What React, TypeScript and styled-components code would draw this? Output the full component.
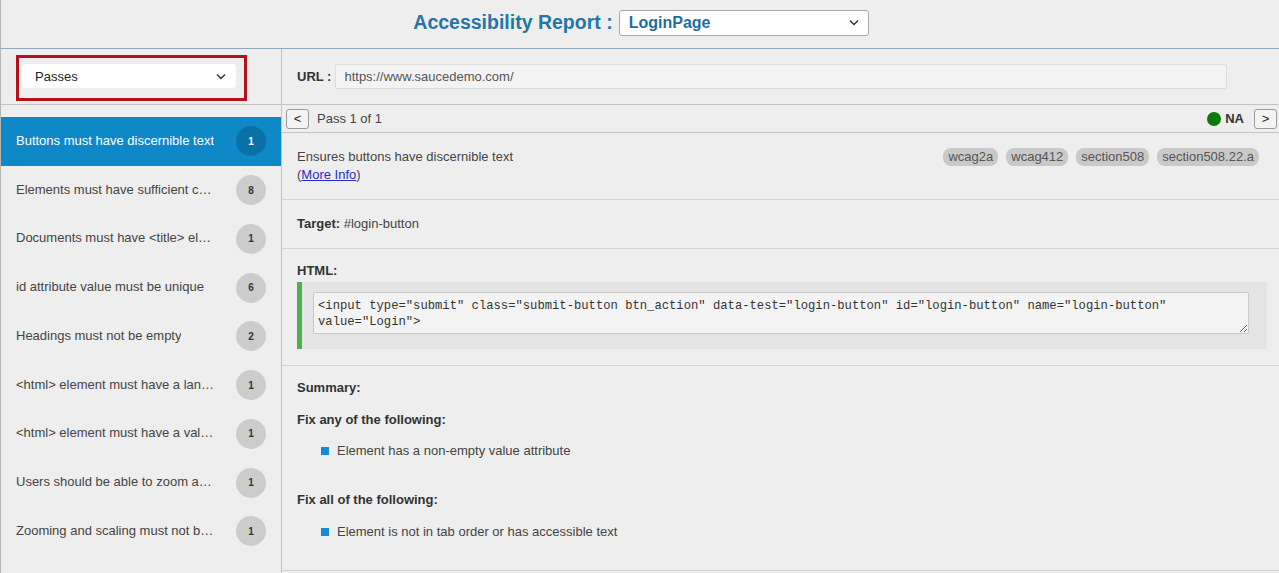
import React from "react";
import styled, { createGlobalStyle } from "styled-components";

const Global = createGlobalStyle`
  html, body { margin: 0; padding: 0; background: #eeeeee; }
  body { font-family: "Liberation Sans", Arial, sans-serif; font-size: 13px; color: #444; }
  * { box-sizing: border-box; }
`;

const Page = styled.div`
  width: 1279px;
  height: 573px;
  border-left: 1px solid #b5b5b5;
  background: #eeeeee;
  display: flex;
  flex-direction: column;
  overflow: hidden;
`;

const Header = styled.header`
  height: 49px;
  border-bottom: 1px solid #91a9bd;
  display: flex;
  align-items: center;
  justify-content: center;
  gap: 6px;
  padding-bottom: 3px;
  padding-left: 2px;
`;

const Title = styled.h1`
  margin: 0;
  font-size: 19.5px;
  font-weight: bold;
  color: #2476a6;
`;

const Select = styled.div<{ $w: number; $h: number; $bold?: boolean }>`
  width: ${(p) => p.$w}px;
  height: ${(p) => p.$h}px;
  background: #fff;
  border: 1px solid ${(p) => (p.$bold ? "#a9a9a9" : "#ffffff")};
  border-radius: 3px;
  display: flex;
  align-items: center;
  justify-content: space-between;
  padding: 0 9px 0 ${(p) => (p.$bold ? 9 : 12)}px;
  font-size: ${(p) => (p.$bold ? 16 : 13)}px;
  font-weight: ${(p) => (p.$bold ? "bold" : "normal")};
  color: ${(p) => (p.$bold ? "#1f6d9c" : "#222")};
`;

const Body = styled.div`
  flex: 1;
  display: grid;
  grid-template-columns: 281px 1fr;
  min-height: 0;
`;

const Sidebar = styled.aside`
  border-right: 1px solid #c4c4c4;
  display: flex;
  flex-direction: column;
`;

const FilterArea = styled.div`
  height: 56px;
  border-bottom: 1px solid #c4c4c4;
  padding: 6px 0 0 15px;
`;

const Highlight = styled.div`
  width: 231px;
  height: 46px;
  border: 3px solid #b3121a;
  padding: 6px 0 0 3px;
`;

const RuleList = styled.ul`
  list-style: none;
  margin: 0;
  padding: 12px 0 0;
`;

const RuleItem = styled.li<{ $active?: boolean }>`
  height: 48.75px;
  display: flex;
  align-items: center;
  justify-content: space-between;
  padding: 0 15px 0 15px;
  background: ${(p) => (p.$active ? "#0f88c8" : "transparent")};
  color: ${(p) => (p.$active ? "#fff" : "#444")};
  font-size: 13px;
`;

const RuleText = styled.span`
  max-width: 202px;
  white-space: nowrap;
  overflow: hidden;
  text-overflow: ellipsis;
  position: relative;
  top: -1px;
`;

const Badge = styled.span<{ $active?: boolean }>`
  flex: none;
  width: 30px;
  height: 30px;
  border-radius: 50%;
  background: ${(p) => (p.$active ? "#0b70a6" : "#cccccc")};
  color: ${(p) => (p.$active ? "#fff" : "#333")};
  font-size: 10px;
  font-weight: bold;
  display: flex;
  align-items: center;
  justify-content: center;
`;

const Main = styled.main`
  display: flex;
  flex-direction: column;
`;

const UrlRow = styled.div`
  height: 56px;
  border-bottom: 1px solid #c4c4c4;
  display: flex;
  align-items: center;
  padding: 0 52px 1px 15px;
  gap: 4px;
`;

const Label = styled.span`
  font-weight: bold;
  color: #333;
`;

const UrlField = styled.div`
  flex: 1;
  height: 25px;
  background: #f3f3f3;
  border: 1px solid #dddddd;
  border-radius: 2px;
  display: flex;
  align-items: center;
  padding-left: 8px;
  color: #555;
`;

const NavRow = styled.div`
  height: 28px;
  border-bottom: 1px solid #c4c4c4;
  display: flex;
  align-items: center;
  padding: 0 2px 0 4px;
  gap: 8px;
`;

const NavButton = styled.span`
  width: 23px;
  height: 20px;
  border: 1px solid #9a9a9a;
  border-radius: 3px;
  background: #f4f4f4;
  display: flex;
  align-items: center;
  justify-content: center;
  font-size: 13px;
  color: #222;
`;

const Spacer = styled.span`
  flex: 1;
`;

const Status = styled.span`
  display: flex;
  align-items: center;
  gap: 4px;
  font-weight: bold;
  color: #333;
  margin-right: 2px;
`;

const Dot = styled.span`
  width: 14px;
  height: 14px;
  border-radius: 50%;
  background: #0a7a0a;
`;

const Section = styled.section<{ $pt: number; $pb: number }>`
  padding: ${(p) => p.$pt}px 20px ${(p) => p.$pb}px 15px;
  border-bottom: 1px solid #d4d4d4;
  line-height: 18px;
`;

const DescRow = styled.div`
  display: flex;
  justify-content: space-between;
  align-items: flex-start;
`;

const Tags = styled.div`
  display: flex;
  gap: 8px;
`;

const Tag = styled.span`
  background: #c9c9c9;
  border-radius: 8px;
  padding: 0 5px;
  color: #555;
`;

const Link = styled.a`
  color: #2a2acc;
  text-decoration: underline;
`;

const CodeBlock = styled.div`
  margin-top: 2px;
  margin-right: -8px;
  border-left: 5px solid #4caf50;
  background: #e4e4e4;
  padding: 10px 18px 15px 11px;
`;

const CodeArea = styled.textarea`
  display: block;
  width: 100%;
  height: 42px;
  background: #f3f3f3;
  border: 1px solid #c9c9c9;
  border-radius: 2px;
  font-family: "Liberation Mono", "DejaVu Sans Mono", monospace;
  font-size: 12.2px;
  line-height: 16px;
  color: #333;
  padding: 5px 4px 3px;
  resize: vertical;
  overflow: hidden;
`;

const Heading = styled.div<{ $mt: number }>`
  font-weight: bold;
  color: #333;
  margin-top: ${(p) => p.$mt}px;
`;

const BulletList = styled.ul<{ $mt: number }>`
  list-style: none;
  margin: ${(p) => p.$mt}px 0 0;
  padding: 0 0 0 24px;
`;

const Bullet = styled.li`
  display: flex;
  align-items: center;
  gap: 8px;
  &::before {
    content: "";
    width: 8px;
    height: 8px;
    background: #1a8ad0;
  }
`;

const Chevron = () => (
  <svg width="10" height="7" viewBox="0 0 10 7">
    <path d="M1 1.5 L5 5.5 L9 1.5" fill="none" stroke="#333" strokeWidth="1.5" />
  </svg>
);

const rules = [
  { t: "Buttons must have discernible text", n: 1 },
  { t: "Elements must have sufficient c…", n: 8 },
  { t: "Documents must have <title> el…", n: 1 },
  { t: "id attribute value must be unique", n: 6 },
  { t: "Headings must not be empty", n: 2 },
  { t: "<html> element must have a lan…", n: 1 },
  { t: "<html> element must have a val…", n: 1 },
  { t: "Users should be able to zoom a…", n: 1 },
  { t: "Zooming and scaling must not b…", n: 1 },
];

const html =
  '<input type="submit" class="submit-button btn_action" data-test="login-button" id="login-button" name="login-button" value="Login">';

export default function App() {
  return (
    <>
      <Global />
      <Page>
        <Header>
          <Title>Accessibility Report :</Title>
          <Select $w={250} $h={26} $bold>
            <span>LoginPage</span>
            <Chevron />
          </Select>
        </Header>
        <Body>
          <Sidebar>
            <FilterArea>
              <Highlight>
                <Select $w={214} $h={24}>
                  <span>Passes</span>
                  <Chevron />
                </Select>
              </Highlight>
            </FilterArea>
            <RuleList>
              {rules.map((r, i) => (
                <RuleItem key={r.t} $active={i === 0}>
                  <RuleText>{r.t}</RuleText>
                  <Badge $active={i === 0}>{r.n}</Badge>
                </RuleItem>
              ))}
            </RuleList>
          </Sidebar>
          <Main>
            <UrlRow>
              <Label>URL :</Label>
              <UrlField>https://www.saucedemo.com/</UrlField>
            </UrlRow>
            <NavRow>
              <NavButton>&lt;</NavButton>
              <span>Pass 1 of 1</span>
              <Spacer />
              <Status>
                <Dot />
                NA
              </Status>
              <NavButton>&gt;</NavButton>
            </NavRow>
            <Section $pt={15} $pb={15}>
              <DescRow>
                <div>
                  Ensures buttons have discernible text
                  <br />(<Link href="#">More Info</Link>)
                </div>
                <Tags>
                  <Tag>wcag2a</Tag>
                  <Tag>wcag412</Tag>
                  <Tag>section508</Tag>
                  <Tag>section508.22.a</Tag>
                </Tags>
              </DescRow>
            </Section>
            <Section $pt={15} $pb={15}>
              <Label>Target:</Label> #login-button
            </Section>
            <Section $pt={13} $pb={16}>
              <Label>HTML:</Label>
              <CodeBlock>
                <CodeArea readOnly value={html} />
              </CodeBlock>
            </Section>
            <Section $pt={13} $pb={29}>
              <Heading $mt={0}>Summary:</Heading>
              <Heading $mt={14}>Fix any of the following:</Heading>
              <BulletList $mt={13}>
                <Bullet>Element has a non-empty value attribute</Bullet>
              </BulletList>
              <Heading $mt={31}>Fix all of the following:</Heading>
              <BulletList $mt={14}>
                <Bullet>Element is not in tab order or has accessible text</Bullet>
              </BulletList>
            </Section>
          </Main>
        </Body>
      </Page>
    </>
  );
}
